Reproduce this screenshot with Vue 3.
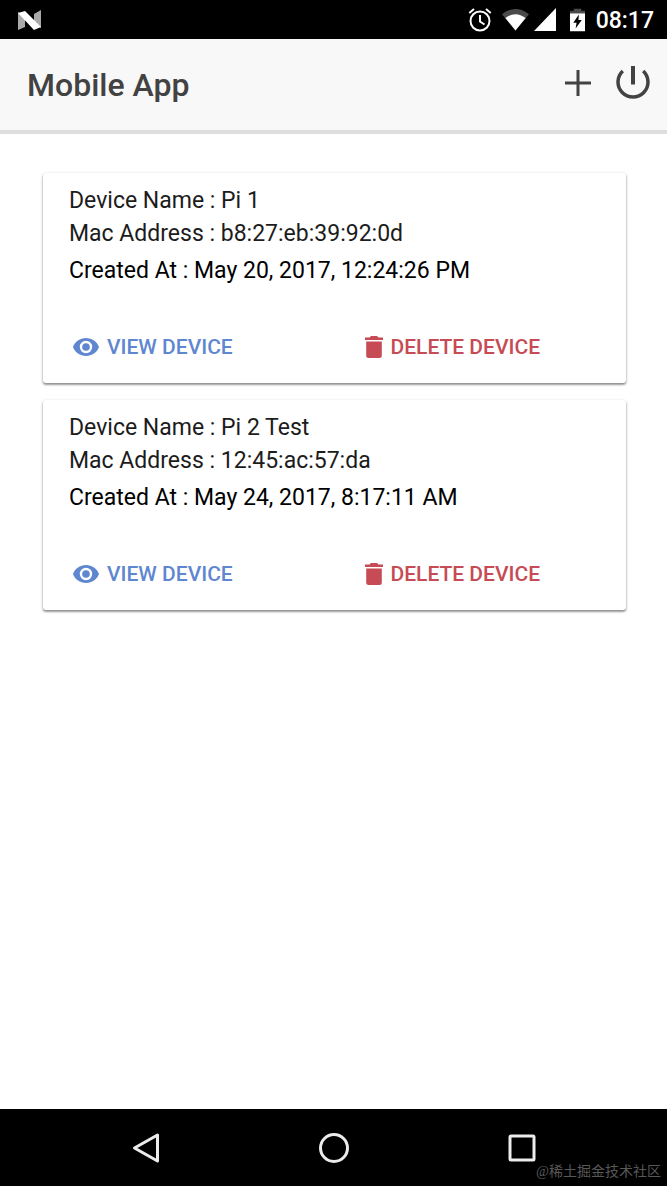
<script setup>
const devices = [
  { id: 1, name: 'Pi 1', mac: 'b8:27:eb:39:92:0d', created: 'May 20, 2017, 12:24:26 PM' },
  { id: 2, name: 'Pi 2 Test', mac: '12:45:ac:57:da', created: 'May 24, 2017, 8:17:11 AM' },
]
</script>

<template>
  <div class="screen">
    <div class="status">
      <svg class="nougat" width="24" height="20" viewBox="0 0 24 20" aria-hidden="true">
        <path d="M0 2 7 6V17L0 20zM16 4 23 0V18L16 14z" fill="#a9a9a9" />
        <path d="M0 3 7 1 23 17 16 20z" fill="#fff" />
      </svg>
      <div class="indicators">
        <svg width="24" height="26" viewBox="0 0 24 26" fill="none" stroke="#fff" aria-hidden="true">
          <circle cx="12" cy="14" r="9.5" stroke-width="2" />
          <path d="M12 8v6.5l4.5 3M1.3 6 6 2M18 2l4.700 4" stroke-width="2" />
        </svg>
        <svg class="wifi" width="27" height="24" viewBox="0 0 28 24" aria-hidden="true">
          <path d="M0 6Q14-5 28 6L14 23z" fill="#4b4b4b" />
          <path d="M3.500 10Q14 2 24.500 10L14 23z" fill="#fff" />
        </svg>
        <svg class="signal" width="22" height="23" viewBox="0 0 22 23" aria-hidden="true">
          <path d="M22 0V23H0z" fill="#fff" />
        </svg>
        <svg class="battery" width="15" height="24" viewBox="0 0 16 24" aria-hidden="true">
          <path d="M4 0H12V2H16V6H0V2H4z" fill="#4b4b4b" />
          <path d="M0 5H16V24H0z" fill="#fff" />
          <path d="M9.500 6 3.500 15H7L6 21 12.500 12H9z" fill="#000" />
        </svg>
        <time class="clock">08:17</time>
      </div>
    </div>

    <header class="toolbar">
      <h1>Mobile App</h1>
      <div class="tools">
        <button type="button" aria-label="Add device">
          <svg width="26" height="26" viewBox="0 0 26 26" aria-hidden="true">
            <path d="M13 0V26M0 13H26" stroke="#424242" stroke-width="3" />
          </svg>
        </button>
        <button type="button" aria-label="Log out">
          <svg width="34" height="34" viewBox="0 0 34 34" fill="none" stroke="#424242" aria-hidden="true">
            <path d="M17 0V18.500" stroke-width="4" />
            <path d="M6.800 5A15 15 0 1 0 27.200 5" stroke-width="3.500" />
          </svg>
        </button>
      </div>
    </header>

    <main class="content">
      <article v-for="d in devices" :key="d.id" class="card">
        <p>Device Name : {{ d.name }}</p>
        <p>Mac Address : {{ d.mac }}</p>
        <p class="created">Created At : {{ d.created }}</p>
        <div class="actions">
          <button type="button" class="view">
            <svg width="26" height="18" viewBox="0 0 26 18" aria-hidden="true">
              <path fill="currentColor" fill-rule="evenodd" d="M13 0C7 0 2 3.700 0 9c2 5.300 7 9 13 9s11-3.700 13-9C24 3.700 19 0 13 0zM13 15.200a6.200 6.200 0 1 1 0-12.400 6.200 6.200 0 0 1 0 12.400zM13 5.200a3.800 3.800 0 1 0 0 7.600 3.800 3.800 0 0 0 0-7.600z" />
            </svg>
            View Device
          </button>
          <button type="button" class="delete">
            <svg width="18" height="22" viewBox="0 0 18 22" aria-hidden="true">
              <path fill="currentColor" d="M0 1.500H4.500L6 0H12L13.500 1.500H18V4H0zM1.200 5.500H16.800V19.500Q16.800 22 14.300 22H3.700Q1.200 22 1.200 19.500z" />
            </svg>
            Delete Device
          </button>
        </div>
      </article>
    </main>

    <nav class="navbar" aria-label="System navigation">
      <button type="button" aria-label="Back">
        <svg width="32" height="32" viewBox="0 0 32 32" aria-hidden="true">
          <path d="M27.500 3V29L4.500 16z" />
        </svg>
      </button>
      <button type="button" aria-label="Home">
        <svg width="32" height="32" viewBox="0 0 32 32" aria-hidden="true">
          <circle cx="16" cy="16" r="13.500" />
        </svg>
      </button>
      <button type="button" aria-label="Recent apps">
        <svg width="32" height="32" viewBox="0 0 32 32" aria-hidden="true">
          <rect x="4" y="4" width="24" height="24" rx="1" />
        </svg>
      </button>
      <span class="watermark">@稀土掘金技术社区</span>
    </nav>
  </div>
</template>

<style>
body {
  margin: 0;
  background: #fff;
}
</style>

<style scoped>
.screen {
  display: flex;
  flex-direction: column;
  min-height: 100vh;
  font-family: Roboto, "Noto Sans CJK SC", sans-serif;
  color: #1c1c1c;
}
button {
  display: flex;
  align-items: center;
  padding: 0;
  border: 0;
  background: none;
  font: inherit;
  cursor: pointer;
}
svg {
  display: block;
  flex: none;
}
.status {
  display: flex;
  align-items: center;
  justify-content: space-between;
  height: 39px;
  padding: 0 13px 0 18px;
  background: #000;
  color: #fff;
}
.indicators {
  display: flex;
  align-items: center;
}
.wifi {
  margin-left: 10px;
}
.signal {
  margin-left: 5px;
}
.battery {
  margin-left: 14px;
}
.clock {
  margin-left: 11px;
  padding-top: 3px;
  font-size: 23px;
  font-weight: 500;
  line-height: 28px;
}
.toolbar {
  display: flex;
  align-items: center;
  justify-content: space-between;
  height: 91px;
  padding: 0 17px 0 27px;
  border-bottom: 4px solid #dedede;
  background: #f8f8f8;
}
h1 {
  margin: 0;
  font-size: 32px;
  font-weight: 500;
  line-height: 40px;
  color: #424242;
}
.tools {
  display: flex;
  align-items: center;
  gap: 25px;
  padding-bottom: 4px;
}
.content {
  display: flex;
  flex: 1;
  flex-direction: column;
  gap: 17px;
  padding: 39px 41px 39px 43px;
}
.card {
  padding: 11px 26px 22px;
  border-radius: 3px;
  background: #fff;
  box-shadow: 0 2px 2px rgba(0, 0, 0, 0.28), 0 1px 3px rgba(0, 0, 0, 0.3);
}
p {
  margin: 0;
  font-size: 23px;
  line-height: 33px;
}
.created {
  padding-top: 4px;
  color: #000;
}
.actions {
  display: grid;
  grid-template-columns: 1fr 1fr;
  gap: 56px;
  padding: 46px 0 0 4px;
}
.actions button {
  gap: 8px;
  font-size: 21px;
  font-weight: 500;
  line-height: 28px;
  text-transform: uppercase;
  white-space: nowrap;
}
.actions .view {
  color: #5f87d0;
}
.actions .delete {
  color: #c64b55;
}
.navbar {
  position: relative;
  display: flex;
  align-items: center;
  justify-content: center;
  gap: 156px;
  height: 77px;
  background: #000;
}
.navbar svg {
  fill: none;
  stroke: #ececec;
  stroke-width: 3;
  stroke-linejoin: round;
}
.watermark {
  position: absolute;
  right: 6px;
  bottom: 4px;
  font-family: "Liberation Serif", "Noto Sans CJK SC", serif;
  font-size: 14px;
  line-height: 20px;
  color: #585858;
}
</style>
